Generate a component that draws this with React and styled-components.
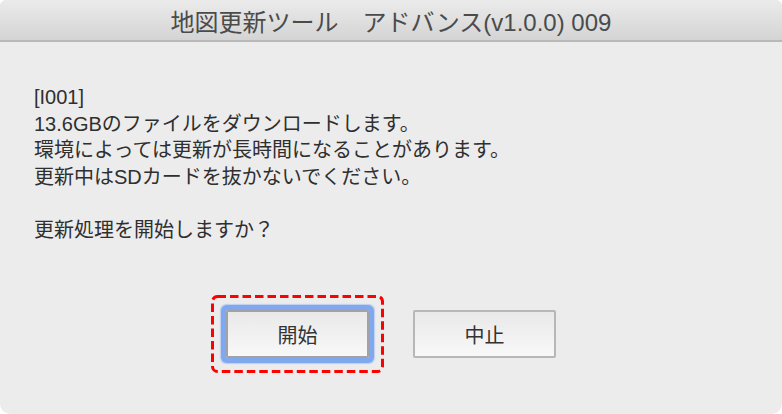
import styled, { createGlobalStyle } from 'styled-components'

const GlobalStyle = createGlobalStyle`
  html, body {
    margin: 0;
    padding: 0;
    background: #ffffff;
  }
  body {
    font-family: "Liberation Sans", "Noto Sans CJK JP", sans-serif;
  }
`

const Window = styled.div`
  height: 100vh;
  display: flex;
  flex-direction: column;
  background: #ececec;
  border-radius: 6px 6px 10px 10px;
  overflow: hidden;
`

const TitleBar = styled.div`
  height: 40px;
  flex-shrink: 0;
  display: flex;
  align-items: center;
  justify-content: center;
  background: linear-gradient(#ebebeb, #d4d4d4);
  border-bottom: 2px solid #b9b9b9;
  color: #4b4b4b;
  font-size: 24px;
  white-space: pre;
`

const Message = styled.div`
  padding: 42px 34px 0;
  font-size: 20px;
  line-height: 26.5px;
  color: #2f2f2f;
`

const Line = styled.div`
  min-height: 26.5px;
`

const ButtonRow = styled.div`
  display: flex;
  justify-content: center;
  gap: 44px;
  margin-top: 67px;
`

const Highlight = styled.div`
  position: relative;
  margin: -15px;
  padding: 15px;
`

const DashedFrame = styled.svg`
  position: absolute;
  inset: 0;
  width: 100%;
  height: 100%;
  pointer-events: none;
`

const Button = styled.button`
  width: 143px;
  height: 48px;
  box-sizing: border-box;
  display: flex;
  align-items: center;
  justify-content: center;
  padding: 0;
  border: 2px solid ${p => (p.$focused ? '#a2a2a2' : '#b7b7b7')};
  border-radius: 2px;
  background: linear-gradient(#e9e9e9, #f8f8f8);
  color: #333333;
  font-family: inherit;
  font-size: 20px;
  box-shadow: ${p => (p.$focused ? '0 0 0 5px #80a8f0, 0 0 1px 6px rgba(128, 168, 240, 0.45)' : 'none')};
  outline: 0;
`

const lines = [
  '[I001]',
  '13.6GBのファイルをダウンロードします。',
  '環境によっては更新が長時間になることがあります。',
  '更新中はSDカードを抜かないでください。',
  '',
  '更新処理を開始しますか？',
]

const App = () => (
  <>
    <GlobalStyle />
    <Window>
      <TitleBar>地図更新ツール　アドバンス(v1.0.0) 009</TitleBar>
      <Message>
        {lines.map((text, i) => (
          <Line key={i}>{text}</Line>
        ))}
      </Message>
      <ButtonRow>
        <Highlight>
          <Button $focused>開始</Button>
          <DashedFrame viewBox="0 0 173 78" preserveAspectRatio="none">
            <rect x="1.5" y="1.5" width="170" height="75" rx="5" fill="none" stroke="#ff0000" strokeWidth="3" strokeDasharray="8.5 4" />
          </DashedFrame>
        </Highlight>
        <Button>中止</Button>
      </ButtonRow>
    </Window>
  </>
)

export default App
